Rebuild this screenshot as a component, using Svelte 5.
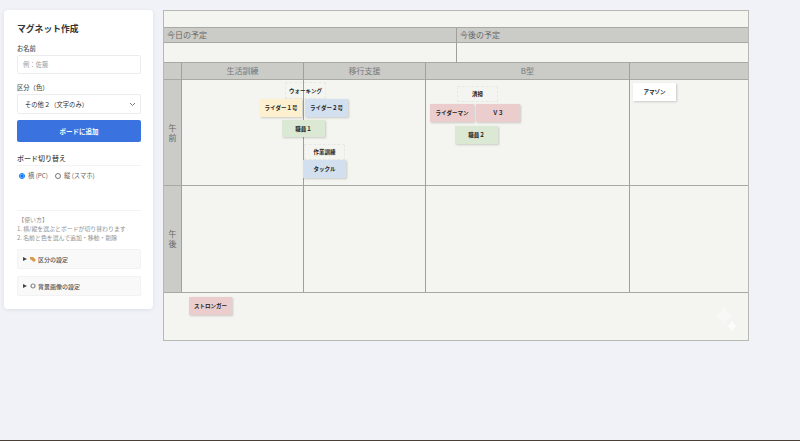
<script>
	const magnets = [
		{ label: 'ウォーキング', x: 285, y: 82, w: 41, h: 17, kind: 'text' },
		{ label: 'ライダー１号', x: 260, y: 99, w: 42, h: 18, kind: 'yellow' },
		{ label: 'ライダー２号', x: 305, y: 99, w: 43, h: 18, kind: 'blue' },
		{ label: '職員１', x: 282, y: 120, w: 43, h: 17, kind: 'green' },
		{ label: '作業訓練', x: 304, y: 144, w: 41, h: 16, kind: 'text' },
		{ label: 'タックル', x: 303, y: 160, w: 43, h: 18, kind: 'blue' },
		{ label: '清掃', x: 457, y: 86, w: 41, h: 16, kind: 'text' },
		{ label: 'ライダーマン', x: 430, y: 104, w: 44, h: 18, kind: 'pink' },
		{ label: 'Ｖ３', x: 476, y: 104, w: 44, h: 18, kind: 'pink' },
		{ label: '職員２', x: 455, y: 126, w: 43, h: 18, kind: 'green' },
		{ label: 'アマゾン', x: 633, y: 83, w: 43, h: 18, kind: 'white' },
		{ label: 'ストロンガー', x: 189, y: 297, w: 43, h: 18, kind: 'pink' }
	]
</script>

<div class="page">
	<aside class="panel">
		<h2>マグネット作成</h2>
		<label class="field-label" for="name">お名前</label>
		<input id="name" type="text" placeholder="例：佐藤" />
		<label class="field-label" for="group">区分（色）</label>
		<div class="select" id="group">
			<span>その他２（文字のみ）</span>
			<svg width="7" height="5" viewBox="0 0 7 5"><path d="M1 1l2.500 2.500L6 1" fill="none" stroke="#777" stroke-width="1" /></svg>
		</div>
		<button class="add">ボードに追加</button>
		<div class="section-title">ボード切り替え</div>
		<div class="radios">
			<label><input type="radio" name="mode" checked />横 (PC)</label>
			<label><input type="radio" name="mode" />縦 (スマホ)</label>
		</div>
		<div class="help">
			<p>&nbsp;【使い方】</p>
			<p>1. 横/縦を選ぶとボードが切り替わります</p>
			<p>2. 名前と色を選んで追加・移動・削除</p>
		</div>
		<div class="details">
			<svg class="arrow" width="4" height="4" viewBox="0 0 4 4"><path d="M0 0l4 2-4 2z" fill="#444" /></svg>
			<svg width="6" height="6" viewBox="0 0 6 6"><path d="M0 1h3l3 3-2 2-4-3z" fill="#d89a45" /></svg>
			区分の設定
		</div>
		<div class="details">
			<svg class="arrow" width="4" height="4" viewBox="0 0 4 4"><path d="M0 0l4 2-4 2z" fill="#444" /></svg>
			<svg width="6" height="6" viewBox="0 0 6 6"><circle cx="3" cy="3" r="2" fill="none" stroke="#888" stroke-width="1.200" /></svg>
			背景画像の設定
		</div>
	</aside>

	<main class="board">
		<div class="top-blank"></div>
		<div class="plans">
			<div class="plan-head">今日の予定</div>
			<div class="plan-head">今後の予定</div>
			<div class="plan-body"></div>
			<div class="plan-body"></div>
		</div>
		<div class="table">
			<div class="head"></div>
			<div class="head">生活訓練</div>
			<div class="head">移行支援</div>
			<div class="head">B型</div>
			<div class="head"></div>
			<div class="side">午<br />前</div>
			<div class="cell"></div>
			<div class="cell"></div>
			<div class="cell"></div>
			<div class="cell"></div>
			<div class="side">午<br />後</div>
			<div class="cell"></div>
			<div class="cell"></div>
			<div class="cell"></div>
			<div class="cell"></div>
		</div>
		<svg class="sparkle" width="26" height="28" viewBox="0 0 26 28">
			<path d="M10 0q1.500 8 10 10q-8.500 2-10 10q-1.500-8-10-10q8.500-2 10-10z" fill="#fff" opacity=".4" />
			<path d="M18 14q1 5 6 6q-5 1-6 6q-1-5-6-6q5-1 6-6z" fill="#fff" opacity=".75" />
		</svg>
	</main>

	{#each magnets as m}
		<div class="magnet {m.kind}" style="left:{m.x}px;top:{m.y}px;width:{m.w}px;height:{m.h}px">{m.label}</div>
	{/each}

	<div class="bottom-line"></div>
</div>

<style>
	:global(body) {
		margin: 0;
		background: #f0f2f7;
		font-family: "Noto Sans CJK JP", "Liberation Sans", sans-serif;
	}
	.page {
		position: relative;
		height: 441px;
		overflow: hidden;
		display: flex;
		align-items: flex-start;
		gap: 10px;
		padding: 10px 0 0 4px;
		box-sizing: border-box;
		background: #f0f2f7;
	}
	.panel {
		width: 149px;
		height: 299px;
		box-sizing: border-box;
		padding: 13px 12px 0 13px;
		background: #fff;
		border-radius: 4px;
		box-shadow: 0 1px 4px rgba(0, 0, 0, 0.08);
		color: #444;
		display: flex;
		flex-direction: column;
	}
	h2 {
		margin: 0 0 9px;
		font-size: 8.800px;
		line-height: 12px;
		font-weight: 700;
		color: #333;
	}
	.field-label {
		font-size: 6.300px;
		line-height: 9px;
		font-weight: 500;
		color: #555;
		margin-bottom: 2px;
	}
	input[type='text'] {
		width: 100%;
		height: 19px;
		box-sizing: border-box;
		margin: 0 0 9px;
		padding: 0 5px;
		border: 1px solid #ececec;
		border-radius: 2px;
		font: 6.300px "Noto Sans CJK JP", sans-serif;
		outline: none;
	}
	input::placeholder {
		color: #999;
	}
	.select {
		height: 20px;
		box-sizing: border-box;
		margin-bottom: 6px;
		padding: 0 4px 0 7px;
		border: 1px solid #ececec;
		border-radius: 2px;
		font-size: 6.300px;
		color: #333;
		display: flex;
		align-items: center;
		justify-content: space-between;
	}
	.add {
		height: 22px;
		margin: 0 0 11px;
		padding: 0;
		border: 0;
		border-radius: 2px;
		background: #3a72e0;
		color: #fff;
		font: 700 6.500px "Noto Sans CJK JP", sans-serif;
	}
	.section-title {
		font-size: 7px;
		line-height: 10px;
		font-weight: 500;
		color: #444;
		padding-bottom: 2px;
		border-bottom: 1px solid #f3f3f3;
	}
	.radios {
		display: flex;
		gap: 7px;
		padding: 5px 0 0 2px;
		height: 39px;
		border-bottom: 1px solid #f3f3f3;
		font-size: 6.300px;
		color: #666;
	}
	.radios label {
		display: flex;
		align-items: flex-start;
		line-height: 10px;
		gap: 1px;
	}
	.radios input {
		width: 6px;
		height: 6px;
		margin: 2px 2px 0 0;
	}
	.help {
		margin-top: 4px;
		margin-bottom: 7px;
		font-size: 5.900px;
		line-height: 9px;
		color: #919191;
	}
	.help p {
		margin: 0;
	}
	.details {
		height: 20px;
		box-sizing: border-box;
		margin-bottom: 7px;
		padding-left: 5px;
		background: #f9f9f9;
		border: 1px solid #f2f2f2;
		border-radius: 2px;
		display: flex;
		align-items: center;
		gap: 2px;
		font-size: 6px;
		font-weight: 500;
		color: #555;
	}
	.arrow {
		margin-right: 1px;
	}
	.board {
		position: relative;
		width: 586px;
		height: 331px;
		box-sizing: border-box;
		border: 1px solid #b8b8b2;
		background: #f4f5f0;
		display: flex;
		flex-direction: column;
	}
	.top-blank {
		height: 16px;
		border-bottom: 1px solid #a9a9a3;
	}
	.plans {
		display: grid;
		grid-template-columns: 292px 1fr;
		grid-template-rows: 15px 20px;
	}
	.plan-head {
		background: #cbcbc7;
		border-bottom: 1px solid #a9a9a3;
		font-size: 8px;
		line-height: 14px;
		padding-left: 3px;
		color: #666;
	}
	.plan-head:nth-child(2),
	.plan-body:nth-child(4) {
		border-left: 1px solid #a0a09b;
	}
	.plan-body {
		border-bottom: 1px solid #a9a9a3;
	}
	.table {
		display: grid;
		grid-template-columns: 17px 122px 122px 204px 1fr;
		grid-template-rows: 17px 106px 106px;
		border-bottom: 1px solid #a9a9a3;
	}
	.head {
		background: #cbcbc7;
		border-bottom: 1px solid #a9a9a3;
		border-left: 1px solid #a0a09b;
		text-align: center;
		font-size: 8px;
		line-height: 16px;
		color: #777;
	}
	.head:first-child {
		border-left: 0;
	}
	.side {
		background: #cbcbc7;
		border-bottom: 1px solid #a9a9a3;
		display: flex;
		align-items: center;
		justify-content: center;
		text-align: center;
		font-size: 8px;
		line-height: 10px;
		color: #666;
	}
	.cell {
		border-left: 1px solid #a0a09b;
		border-bottom: 1px solid #a9a9a3;
	}
	.cell:nth-child(n + 12) {
		border-bottom: 0;
	}
	.side:nth-child(11) {
		border-bottom: 0;
	}
	.sparkle {
		position: absolute;
		right: 8px;
		bottom: 6px;
	}
	.magnet {
		position: absolute;
		box-sizing: border-box;
		display: flex;
		align-items: center;
		justify-content: center;
		font-size: 5.500px;
		font-weight: 700;
		color: #222;
		white-space: nowrap;
		box-shadow: 1px 1px 2px rgba(0, 0, 0, 0.18);
	}
	.text {
		background: transparent;
		border: 1px dashed #e8e8e5;
		box-shadow: none;
	}
	.yellow {
		background: #fdf0cf;
	}
	.blue {
		background: #d1dfef;
	}
	.green {
		background: #dbe8d4;
	}
	.pink {
		background: #ebcdcd;
	}
	.white {
		background: #fff;
	}
	.bottom-line {
		position: absolute;
		left: 0;
		right: 0;
		bottom: 0;
		height: 1px;
		background: #4a4038;
	}
</style>
